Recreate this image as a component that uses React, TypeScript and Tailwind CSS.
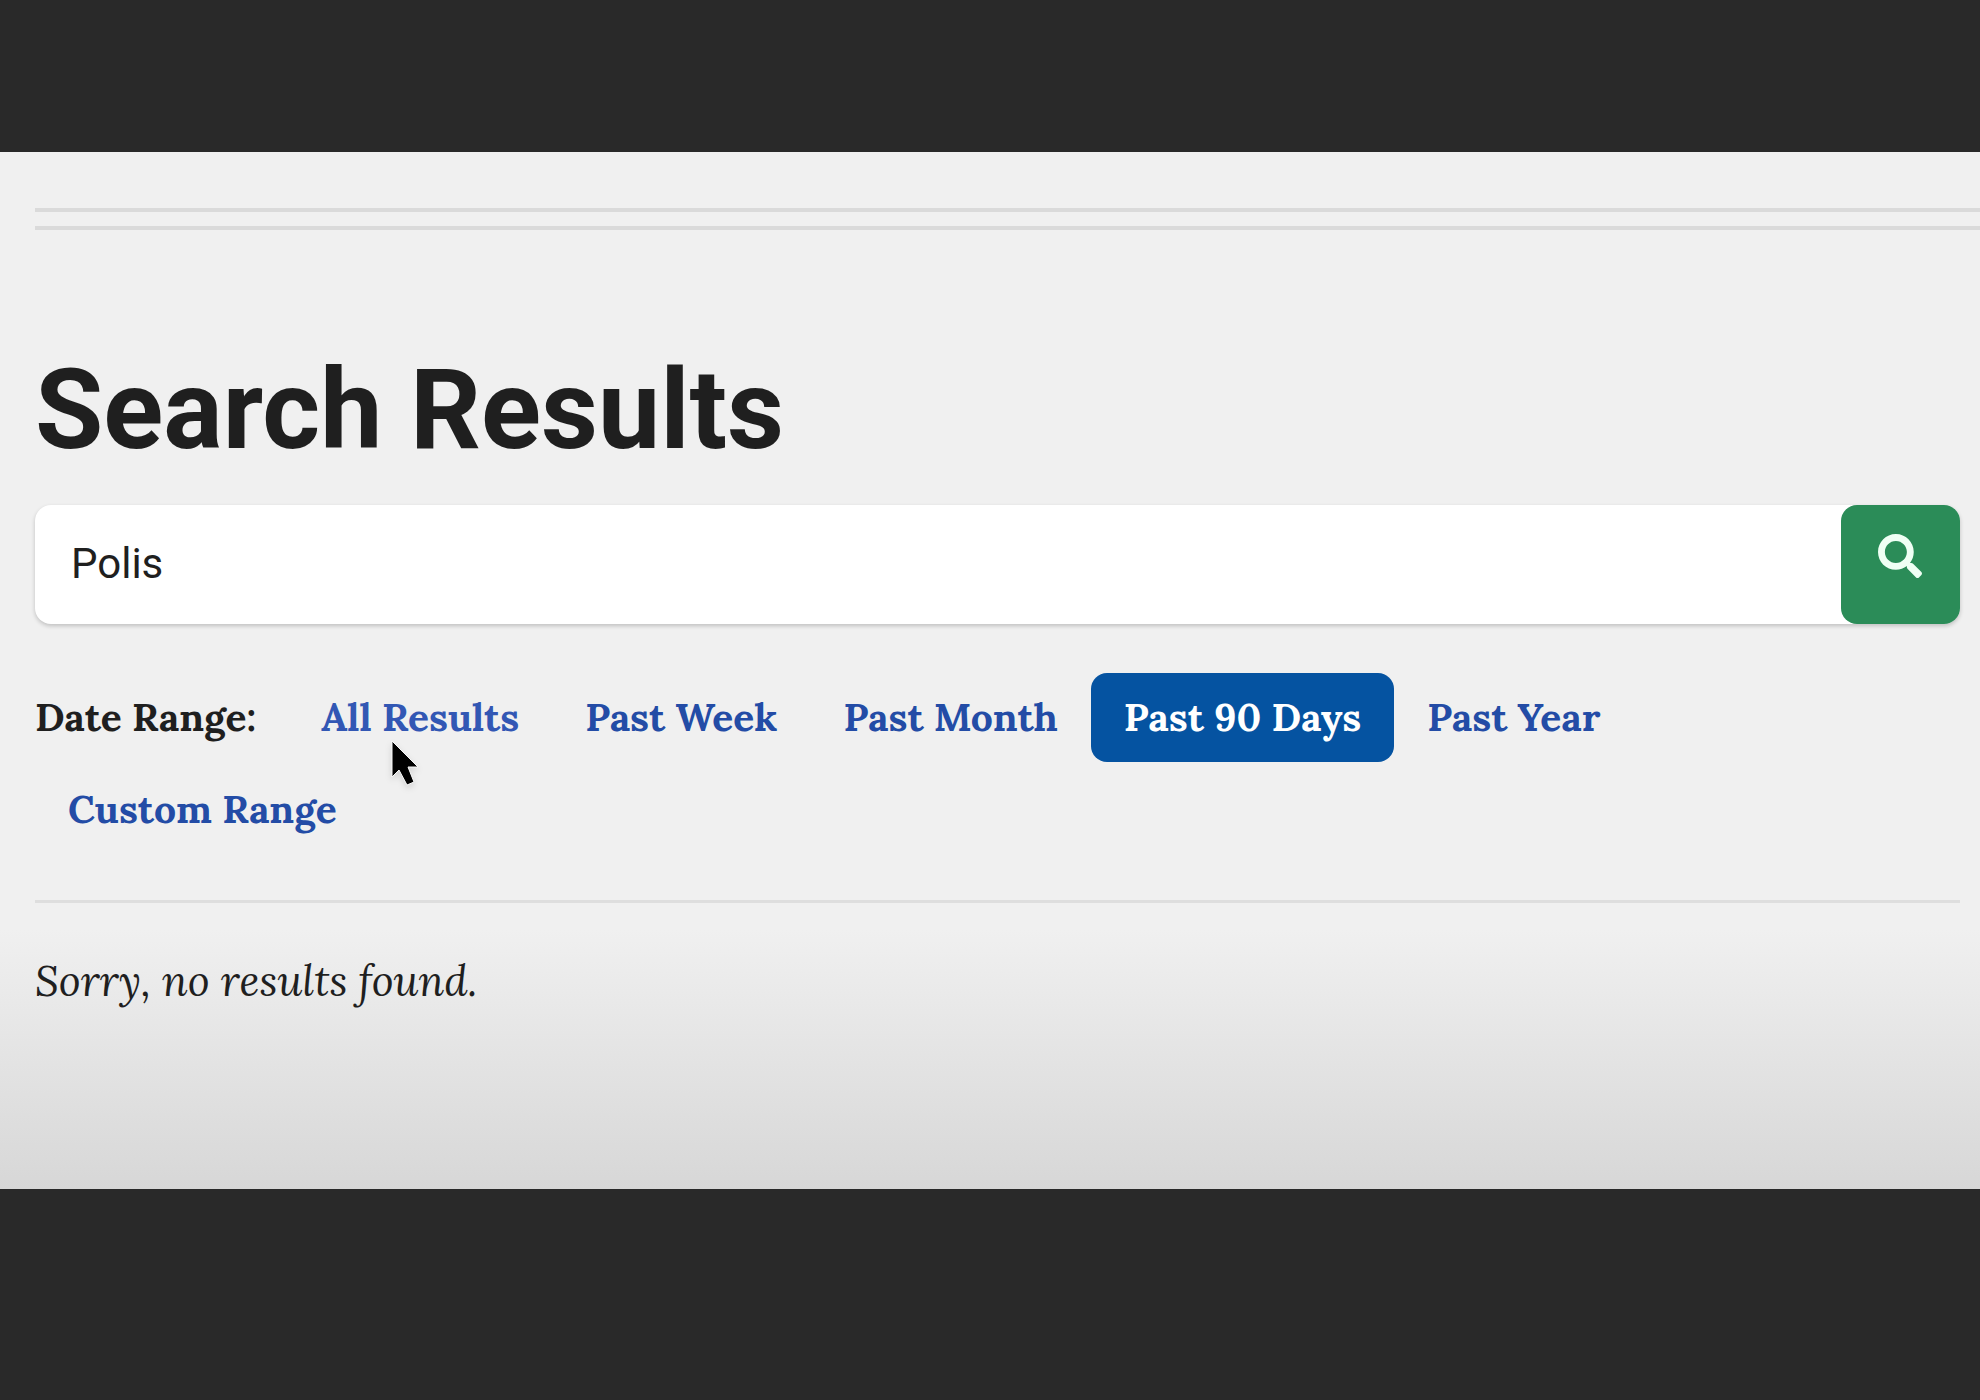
import React, { useState } from 'react';
import { FaSearch } from 'react-icons/fa';

const ranges = [
  'All Results',
  'Past Week',
  'Past Month',
  'Past 90 Days',
  'Past Year',
  'Custom Range',
];

function linkColor(range: string, active: string) {
  if (range === active) return 'bg-[#0553a1] text-white';
  if (range === 'All Results') return 'text-[#3257b4]';
  return 'text-[#234ca6]';
}

function Pointer() {
  return (
    <svg
      viewBox="0 0 28 46"
      className="pointer-events-none absolute left-[102px] top-[67px] h-[46px] w-[28px] drop-shadow-md"
      aria-hidden="true"
    >
      <path
        d="M2 1V37L9 30L17 45L24 42L18 27H28Z"
        fill="#000"
        stroke="#f8f8f8"
        strokeWidth="1"
        strokeLinejoin="round"
      />
    </svg>
  );
}

function App() {
  const [query, setQuery] = useState('Polis');
  const [active, setActive] = useState('Past 90 Days');

  return (
    <div className="min-h-screen bg-[#292929] pt-[152px] pb-[211px]">
      <main className="bg-linear-to-b from-[#f0f0f0] from-75% to-[#d7d7d7] pt-14 pb-[178px] pl-[35px] font-['Lora','Liberation_Serif',serif] text-[#1f1f1f]">
        <div className="h-[22px] border-y-4 border-[#dadada]" />

        <div className="pr-5">
          <h1 className="mt-[116px] font-['Roboto',sans-serif] text-[111px] leading-[128px] font-bold">
            Search Results
          </h1>

          <form
            className="mt-[31px] flex h-[119px] rounded-2xl bg-white shadow-[0_2px_4px_rgba(0,0,0,0.2)]"
            onSubmit={(e) => e.preventDefault()}
          >
            <input
              type="text"
              aria-label="Search"
              value={query}
              onChange={(e) => setQuery(e.target.value)}
              className="min-w-0 flex-1 rounded-l-2xl bg-transparent px-9 pb-0.5 font-['Roboto',sans-serif] text-[42px] outline-none"
            />
            <button
              type="submit"
              aria-label="Submit search"
              className="flex w-[119px] justify-center rounded-2xl bg-[#2b8c58] pt-[29px] pr-0.5 text-[#effff4]"
            >
              <FaSearch className="h-11 w-11" />
            </button>
          </form>

          <nav
            aria-label="Date range"
            className="mt-[49px] flex max-w-[1800px] flex-wrap items-center gap-y-[3px] text-[39px] leading-[49px] font-bold"
          >
            <span className="pr-8">Date Range:</span>
            {ranges.map((range) => (
              <div key={range} className="relative">
                <a
                  href="#"
                  onClick={() => setActive(range)}
                  className={`block rounded-2xl px-[33px] py-5 ${linkColor(range, active)}`}
                >
                  {range}
                </a>
                {range === 'All Results' && <Pointer />}
              </div>
            ))}
          </nav>

          <hr className="mt-[46px] border-t-[3px] border-[#dedede]" />

          <p className="mt-12 text-[42px] leading-[60px] italic">Sorry, no results found.</p>
        </div>
      </main>
    </div>
  );
}

export default App;
